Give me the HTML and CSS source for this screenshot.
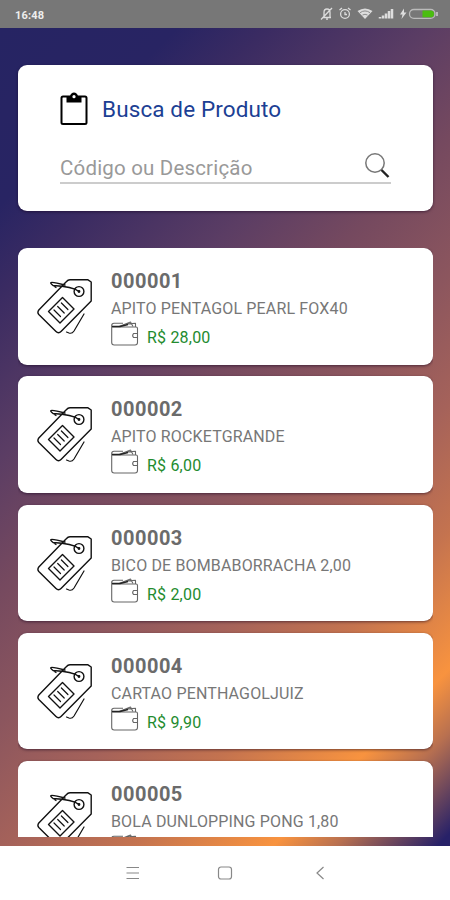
FILE: index.html
```html
<!DOCTYPE html>
<html lang="pt-BR">
<head>
<meta charset="utf-8">
<title>Busca de Produto</title>
<link rel="stylesheet" href="styles.css">
</head>
<body>
<svg width="0" height="0" class="defs">
  <symbol id="tag" viewBox="0 0 56 58">
    <g fill="none" stroke="#111" stroke-width="1.400" stroke-linejoin="round" stroke-linecap="round">
      <path d="M33 1.800H51L54.200 4V23L24 53.500Q21.500 56 19 53.500L1.800 36.500Q0 34.500 1.800 32L29 4Q31 1.800 33 1.800Z"/>
      <path d="M25.500 19.500L37 31L23 45L11.500 33.500Z"/>
      <path d="M17 32l6.500 6.500M20.700 28.500l6.500 6.500M24.400 25l6.500 6.500" stroke-width="1.200"/>
      <circle cx="42" cy="13.500" r="4.900"/>
      <path d="M42 13.500C37 9.500 27 8 16 7.500C11.500 4 14 3.800 20 5.200L28 7M16 7.500L19 9.500" stroke-width="1.300"/>
      <path d="M47 36L37 53Q35 56 32 55L29.500 54" stroke-width="1.200"/>
      <circle cx="42" cy="13.500" r=".7" fill="#111"/>
    </g>
  </symbol>
  <symbol id="wallet" viewBox="0 0 28 26">
    <g fill="none" stroke="#666" stroke-width="1.100" stroke-linejoin="round">
      <path d="M.7 4.500V21.500Q.7 24 3.200 24H24Q26.500 24 26.500 21.500V7.500Q26.500 6 25 6H3Q.7 6 .7 4.500Q.7 2.200 3 2.200H12"/>
      <path d="M8 5.500L19.500 1L22 5.500M14 3L24.500 2.200V6M26.500 12.500H22.500Q20.800 14.500 22.500 16.500H26.500"/>
      <path d="M1 5.500H9L17 3.500" stroke="#222" stroke-width="1.300"/>
    </g>
  </symbol>
</svg>
<div class="screen">
  <header class="status">
    <span class="time">16:48</span>
    <svg class="status-icons" width="120" height="16" viewBox="0 0 120 16" fill="none" stroke="#ddd" stroke-width="1.300">
      <path d="M4 11.500H12M5 11V6.500Q5 3 8 3T11 6.500V11M7 13.200H9M13 2L2 13.500"/>
      <circle cx="26" cy="8" r="4.400"/><path d="M20.500 4l2.500-2M31.500 4l-2.500-2M26 6V8.500H28"/>
      <path d="M38.500 5Q46 0 53.500 5L46 13Z" fill="#ddd" stroke="none"/><path d="M41 6.700Q46 3.200 51 6.700M43.500 9Q46 7.500 48.500 9" stroke="#777" stroke-width=".8"/>
      <path d="M61 12.500V11M64 12.500V9.500M67 12.500V7.500M70 12.500V5M73 12.500V3" stroke-width="2.500"/>
      <path d="M85 2.500L81 8.500H83.500L82.500 13 87.500 6.500H85Z" fill="#ddd" stroke="none"/>
      <rect x="90.500" y="3.500" width="25.500" height="8.800" rx="4.400" stroke="#bbb"/><path d="M118 6V10"/>
      <path d="M103.500 4.500H111.500Q115 4.500 115 7.900T111.500 11.300H103.500Z" fill="#4abd10" stroke="none"/>
    </svg>
  </header>
  <main class="content">
    <section class="card search">
      <div class="heading">
        <svg width="28" height="34" viewBox="0 0 28 34"><rect x="1.500" y="4.500" width="25" height="27.500" rx="1.500" fill="none" stroke="#000" stroke-width="2"/><path d="M6.500 4H10Q11 .5 14 .5T18 4H21.500V10.500H6.500Z"/><circle cx="14" cy="4.700" r="1.600" fill="#fff"/></svg>
        <h1>Busca de Produto</h1>
      </div>
      <div class="field">
        <span>Código ou Descrição</span>
        <svg width="26" height="28" viewBox="0 0 26 28" fill="none"><circle cx="10" cy="12" r="9.200" stroke="#777" stroke-width="1.500"/><path d="M16.500 19L23.500 26" stroke="#222" stroke-width="2.400"/></svg>
      </div>
    </section>
    <section class="list">
      <article class="card item"><svg class="tag"><use href="#tag"/></svg><div class="info"><h2>000001</h2><p class="name">APITO PENTAGOL PEARL FOX40</p><div class="price"><svg><use href="#wallet"/></svg><span>R$ 28,00</span></div></div></article>
      <article class="card item"><svg class="tag"><use href="#tag"/></svg><div class="info"><h2>000002</h2><p class="name">APITO ROCKETGRANDE</p><div class="price"><svg><use href="#wallet"/></svg><span>R$ 6,00</span></div></div></article>
      <article class="card item"><svg class="tag"><use href="#tag"/></svg><div class="info"><h2>000003</h2><p class="name">BICO DE BOMBABORRACHA 2,00</p><div class="price"><svg><use href="#wallet"/></svg><span>R$ 2,00</span></div></div></article>
      <article class="card item"><svg class="tag"><use href="#tag"/></svg><div class="info"><h2>000004</h2><p class="name">CARTAO PENTHAGOLJUIZ</p><div class="price"><svg><use href="#wallet"/></svg><span>R$ 9,90</span></div></div></article>
      <article class="card item"><svg class="tag"><use href="#tag"/></svg><div class="info"><h2>000005</h2><p class="name">BOLA DUNLOPPING PONG 1,80</p><div class="price"><svg><use href="#wallet"/></svg></div></div></article>
    </section>
  </main>
  <nav class="navbar">
    <svg width="14" height="16" viewBox="0 0 14 16"><path d="M.5 2.500H13M.5 8H13M.5 13.500H13"/></svg>
    <svg width="16" height="16" viewBox="0 0 16 16"><rect x="1.500" y="2" width="13" height="12" rx="2.500"/></svg>
    <svg width="10" height="16" viewBox="0 0 10 16"><path d="M8.500 2L2 8l6.500 6"/></svg>
  </nav>
</div>
</body>
</html>
```
FILE: styles.css
```css
* { box-sizing: border-box; margin: 0; padding: 0; }
body { font-family: Roboto, "Liberation Sans", sans-serif; overflow: hidden; }
svg { display: block; flex: none; }
.defs { position: absolute; }
.screen { width: 450px; height: 900px; display: flex; flex-direction: column; }
.status {
  height: 28px; flex: none; background: #777; padding: 0 11px 0 15px;
  display: flex; align-items: center; justify-content: space-between;
}
.time { color: #eee; font-size: 11px; font-weight: 700; letter-spacing: .2px; padding-top: 2px; }
.content {
  height: 818px; flex: none; padding: 37px 17px 9px 18px;
  display: flex; flex-direction: column; gap: 37px;
  background: linear-gradient(135deg, #262463 0%, #282463 14%, #3a2b62 21%, #5b3d64 34%, #75495f 44%, #8c565e 55%, #a5625a 65%, #c4734f 75%, #f8933f 86%, #b87050 91%, #272168 99%);
}
.card { background: #fff; border-radius: 9px; box-shadow: 0 1px 3px rgba(20, 0, 30, .55); }
.search { height: 146px; flex: none; padding: 27px 42px 0; }
.heading { display: flex; align-items: center; gap: 14px; height: 34px; }
h1 { color: #1c3f94; font-size: 22.500px; font-weight: 400; letter-spacing: .12px; line-height: 32px; padding-bottom: 1px; }
.field {
  margin-top: 25px; height: 33px; border-bottom: 2px solid #ccc; width: 331px;
  display: flex; justify-content: space-between; color: #999; font-size: 20.500px; letter-spacing: .18px;
}
.field span { line-height: 34px; }
.list { flex: 1; min-height: 0; overflow: hidden; display: flex; flex-direction: column; gap: 11.800px; }
.item { height: 116.500px; flex: none; display: flex; padding: 20px 19px 0; gap: 18px; }
.tag { width: 56px; height: 58px; margin-top: 10px; }
h2 { color: #6b6b6b; font-size: 20px; font-weight: 700; line-height: 27px; letter-spacing: .5px; }
.name { color: #777; font-size: 16px; line-height: 28px; letter-spacing: .15px; white-space: nowrap; }
.price { display: flex; gap: 8px; color: #238b2e; font-size: 16px; letter-spacing: .2px; }
.price svg { width: 28px; height: 26px; margin-top: -2px; }
.price span { line-height: 29px; }
.navbar { height: 54px; background: #fff; display: flex; align-items: center; justify-content: center; }
.navbar svg { fill: none; stroke: #888; stroke-width: 1.200; }
.navbar svg + svg { margin-left: 77px; }
.navbar svg + svg + svg { margin-left: 82px; }
```
